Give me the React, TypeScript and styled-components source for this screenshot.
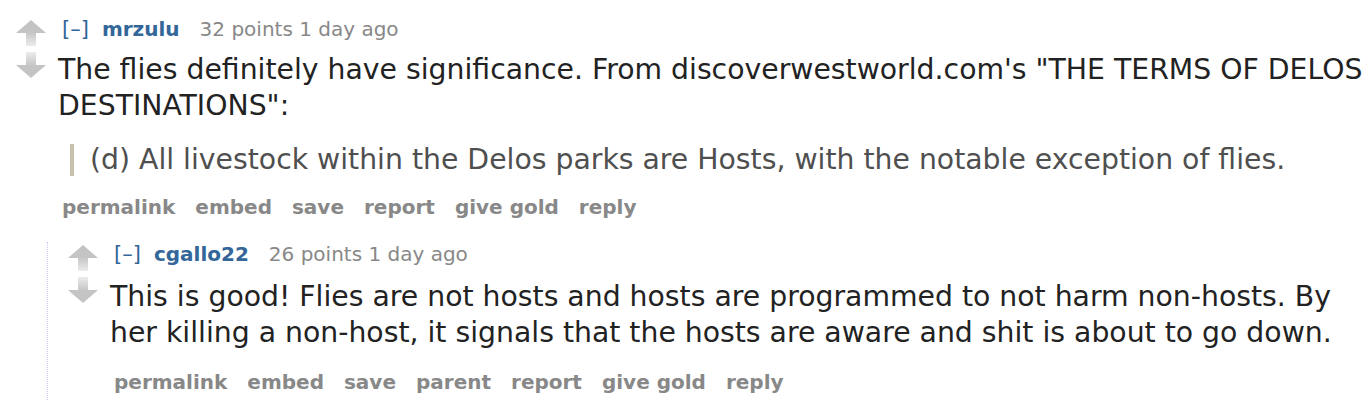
import React from 'react';
import styled, { createGlobalStyle } from 'styled-components';

const GlobalStyle = createGlobalStyle`
  html, body {
    margin: 0;
    padding: 0;
    background: #ffffff;
  }
  body {
    font-family: "DejaVu Sans", Verdana, sans-serif;
  }
`;

const Page = styled.div`
  width: 1368px;
  height: 400px;
  overflow: hidden;
  padding: 17px 0 0 16px;
  box-sizing: border-box;
`;

const CommentRow = styled.div`
  display: flex;
  align-items: flex-start;
`;

const Midcol = styled.div`
  width: 30px;
  flex: 0 0 30px;
  display: flex;
  flex-direction: column;
  gap: 6px;
  margin: 3px 12px 0 0;
`;

const Entry = styled.div`
  flex: 1;
  min-width: 0;
`;

const Tagline = styled.p`
  margin: 0;
  font-size: 20px;
  line-height: 24px;
  color: #888888;
  display: flex;
  align-items: baseline;
  padding-left: 4px;
`;

const Expand = styled.span`
  color: #336699;
  font-size: 21px;
  margin-right: 13px;
`;

const Author = styled.a`
  color: #336699;
  font-weight: bold;
  text-decoration: none;
  margin-right: 20px;
`;

const Body = styled.div<{ $gap: number }>`
  font-size: 28.3px;
  line-height: 36px;
  color: #222222;
  margin-top: ${(p) => p.$gap}px;
  p {
    margin: 0;
  }
`;

const Quote = styled.blockquote`
  margin: 20px 0 0 12px;
  padding: 0 0 0 16px;
  border-left: 4px solid #c5c1ad;
  color: #4f4f4f;
  line-height: 32px;
`;

const Buttons = styled.ul`
  list-style: none;
  margin: 19px 0 0;
  padding: 0 0 0 4px;
  display: flex;
  gap: 20px;
  font-size: 20px;
  line-height: 24px;
  font-weight: bold;
  color: #888888;
`;

const Child = styled.div`
  margin: 23px 0 0 31px;
  border-left: 1px dotted #c8c8f4;
  padding: 0 0 20px 20px;
`;

const Arrow: React.FC<{ down?: boolean }> = ({ down }) => {
  const id = down ? 'shaftDown' : 'shaftUp';
  return (
    <svg width="30" height="26" viewBox="0 0 30 26" style={down ? { transform: 'scaleY(-1)' } : undefined}>
      <defs>
        <linearGradient id={id} x1="0" y1="0" x2="0" y2="1">
          <stop offset="0" stopColor="#c4c4c4" />
          <stop offset="1" stopColor="#ececec" />
        </linearGradient>
      </defs>
      <path d="M15 0 L30 13 L0 13 Z" fill="#c4c4c4" />
      <rect x="10" y="12" width="10" height="14" fill={`url(#${id})`} />
    </svg>
  );
};

interface CommentProps {
  author: string;
  points: number;
  time: string;
  buttons: string[];
  bodyGap: number;
  children: React.ReactNode;
}

const Comment: React.FC<CommentProps> = ({ author, points, time, buttons, bodyGap, children }) => (
  <CommentRow>
    <Midcol>
      <Arrow />
      <Arrow down />
    </Midcol>
    <Entry>
      <Tagline>
        <Expand>[–]</Expand>
        <Author href="#">{author}</Author>
        <span>{points} points {time}</span>
      </Tagline>
      <Body $gap={bodyGap}>{children}</Body>
      <Buttons>
        {buttons.map((b) => (
          <li key={b}>{b}</li>
        ))}
      </Buttons>
    </Entry>
  </CommentRow>
);

export default function App() {
  return (
    <>
      <GlobalStyle />
      <Page>
        <Comment
          author="mrzulu"
          points={32}
          time="1 day ago"
          bodyGap={11}
          buttons={['permalink', 'embed', 'save', 'report', 'give gold', 'reply']}
        >
          <p>
            The flies definitely have significance. From discoverwestworld.com's "THE TERMS OF DELOS
            DESTINATIONS":
          </p>
          <Quote>
            <p>(d) All livestock within the Delos parks are Hosts, with the notable exception of flies.</p>
          </Quote>
        </Comment>
        <Child>
          <Comment
            author="cgallo22"
            points={26}
            time="1 day ago"
            bodyGap={13}
            buttons={['permalink', 'embed', 'save', 'parent', 'report', 'give gold', 'reply']}
          >
            <p>
              This is good! Flies are not hosts and hosts are programmed to not harm non-hosts. By
              her killing a non-host, it signals that the hosts are aware and shit is about to go down.
            </p>
          </Comment>
        </Child>
      </Page>
    </>
  );
}
